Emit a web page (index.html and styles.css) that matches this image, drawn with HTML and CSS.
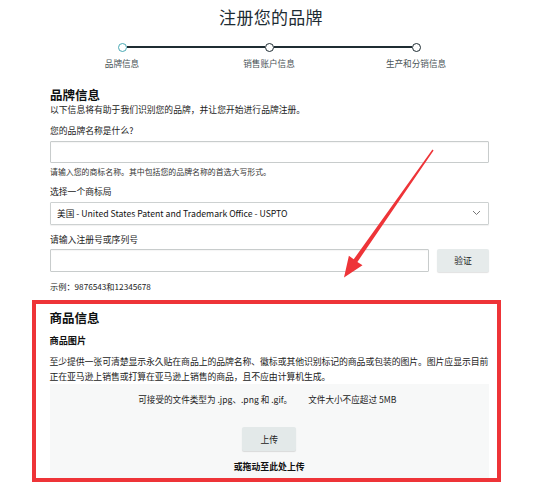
FILE: index.html
```html
<!DOCTYPE html>
<html lang="zh-CN">
<head>
<meta charset="utf-8">
<title>注册您的品牌</title>
<link rel="stylesheet" href="styles.css">
</head>
<body>
<div class="page">
  <h1 class="title">注册您的品牌</h1>

  <div class="stepper">
    <div class="step step-first step-active">
      <div class="dot-row"><span class="dot"></span></div>
      <div class="step-label">品牌信息</div>
    </div>
    <div class="step">
      <div class="dot-row"><span class="dot"></span></div>
      <div class="step-label">销售账户信息</div>
    </div>
    <div class="step step-last">
      <div class="dot-row"><span class="dot"></span></div>
      <div class="step-label">生产和分销信息</div>
    </div>
  </div>

  <main class="main">
    <h2 class="section-title">品牌信息</h2>
    <p class="section-sub">以下信息将有助于我们识别您的品牌，并让您开始进行品牌注册。</p>

    <label class="field-label">您的品牌名称是什么?</label>
    <div class="input"></div>
    <p class="helper">请输入您的商标名称。其中包括您的品牌名称的首选大写形式。</p>

    <label class="field-label field-label-2">选择一个商标局</label>
    <div class="select">
      <span>美国 - United States Patent and Trademark Office - USPTO</span>
      <svg class="chev" width="9" height="6" viewBox="0 0 9 6"><path d="M1 1 L4.5 4.5 L8 1" fill="none" stroke="#777" stroke-width="1"/></svg>
    </div>

    <label class="field-label field-label-3">请输入注册号或序列号</label>
    <div class="input-row">
      <div class="input input-grow"></div>
      <button class="btn btn-verify">验证</button>
    </div>
    <p class="example">示例：9876543和12345678</p>

    <section class="product">
      <h2 class="product-title">商品信息</h2>
      <h3 class="product-sub">商品图片</h3>
      <p class="product-desc">至少提供一张可清楚显示永久贴在商品上的品牌名称、徽标或其他识别标记的商品或包装的图片。图片应显示目前<br>正在亚马逊上销售或打算在亚马逊上销售的商品，且不应由计算机生成。</p>
      <div class="dropzone">
        <p class="drop-info">可接受的文件类型为 .jpg、.png 和 .gif。<span class="gap"></span>文件大小不应超过 5MB</p>
        <button class="btn btn-upload">上传</button>
        <p class="drop-hint">或拖动至此处上传</p>
      </div>
    </section>
  </main>

  <svg class="arrow" width="542" height="500" viewBox="0 0 542 500">
    <polygon points="433.6,150.4 357.4,261.9 362.5,265.3 344,277.5 348.9,255.8 353.7,259.3 432.4,149.6" fill="#ee3438"/>
  </svg>
</div>
</body>
</html>
```

FILE: styles.css
```css
* { box-sizing: border-box; }

html, body {
  margin: 0;
  padding: 0;
  background: #ffffff;
}

body {
  font-family: "Noto Sans CJK SC", "Noto Sans", sans-serif;
  color: #0f1111;
}

.page {
  position: relative;
  width: 542px;
  height: 500px;
  overflow: hidden;
}

.title {
  margin: 0;
  padding-top: 5px;
  font-size: 17px;
  line-height: 24px;
  font-weight: 400;
  text-align: center;
  color: #1d2c33;
  letter-spacing: 0.3px;
}

/* stepper */
.stepper {
  display: flex;
  margin-top: 13.5px;
  margin-left: 48.5px;
}

.step {
  width: 147px;
  display: flex;
  flex-direction: column;
  align-items: center;
}

.dot-row {
  width: 100%;
  height: 9px;
  display: flex;
  align-items: center;
}

.dot-row::before,
.dot-row::after {
  content: "";
  flex: 1;
  height: 2px;
  background: #1f2d33;
}

.step-first .dot-row::before,
.step-last .dot-row::after {
  background: transparent;
}

.dot {
  width: 9px;
  height: 9px;
  border-radius: 50%;
  border: 1.6px solid #1f2d33;
  background: #fff;
}

.step-active .dot {
  border-color: #49a9b4;
}

.step-label {
  margin-top: 5.5px;
  font-size: 8.6px;
  line-height: 12px;
  color: #4a5457;
}

/* main column */
.main {
  margin-left: 50px;
  width: 439px;
}

.section-title {
  margin: 18px 0 0;
  font-size: 12.5px;
  line-height: 16px;
  font-weight: 700;
  color: #0f1111;
}

.section-sub {
  margin: 0;
  font-size: 8.8px;
  line-height: 13px;
  color: #222;
}

.field-label {
  display: block;
  margin-top: 8px;
  font-size: 8.8px;
  line-height: 13px;
  color: #222;
}

.field-label-2 { margin-top: 7.5px; }
.field-label-3 { margin-top: 8.5px; }

.input {
  margin-top: 3.5px;
  height: 22px;
  border: 1px solid #c8cccc;
  border-radius: 1px;
  background: #fff;
  box-shadow: inset 0 1px 1px rgba(0,0,0,0.04);
}

.helper {
  margin: 3px 0 0;
  font-size: 7.9px;
  line-height: 12px;
  color: #333;
}

.select {
  margin-top: 3.5px;
  height: 23px;
  border: 1px solid #cdd1d1;
  border-radius: 1px;
  padding: 0 7px 0 6px;
  display: flex;
  align-items: center;
  justify-content: space-between;
  font-size: 8.7px;
  color: #111;
  box-shadow: 0 1px 1px rgba(0,0,0,0.06);
}

.chev { display: block; }

.input-row {
  display: flex;
  gap: 8px;
  margin-top: 2.5px;
}

.input-row .input {
  margin-top: 0;
  height: 23px;
}

.input-grow { flex: 1; }

.btn {
  font-family: inherit;
  border: none;
  border-radius: 2px;
  background: #e6ebeb;
  color: #222;
  font-size: 8.8px;
  padding: 0;
  box-shadow: 0 1px 1px rgba(0,0,0,0.12);
}

.btn-verify {
  width: 52px;
  height: 23px;
}

.example {
  margin: 8px 0 0;
  font-size: 8.2px;
  line-height: 12px;
  color: #222;
}

/* product section, outlined in red */
.product {
  margin: 8px 0 0 -18px;
  width: 469px;
  border: 4.5px solid #ee3438;
  padding: 6.5px 7px 0 13.5px;
}

.product-title {
  margin: 0;
  font-size: 12.5px;
  line-height: 16px;
  font-weight: 700;
  color: #0f1111;
}

.product-sub {
  margin: 7.5px 0 0;
  font-size: 9.2px;
  line-height: 13px;
  font-weight: 700;
  color: #111;
}

.product-desc {
  margin: 7px -4px 0 0;
  font-size: 8.9px;
  letter-spacing: -0.1px;
  line-height: 15px;
  color: #222;
}

.dropzone {
  margin-top: 0;
  margin-right: 1px;
  background: #f7f8f8;
  padding: 9px 0 5px;
  display: flex;
  flex-direction: column;
  align-items: center;
}

.drop-info {
  margin: 0;
  font-size: 8.6px;
  line-height: 13px;
  color: #222;
  margin-right: 4px;
}

.gap {
  display: inline-block;
  width: 16px;
}

.btn-upload {
  margin-top: 21.5px;
  width: 54px;
  height: 24px;
  background: #e3e9e9;
}

.drop-hint {
  margin: 10px 0 0;
  font-size: 8.9px;
  line-height: 12px;
  font-weight: 700;
  color: #111;
}

/* annotation arrow drawn over the page */
.arrow {
  position: absolute;
  left: 0;
  top: 0;
  pointer-events: none;
}
```
